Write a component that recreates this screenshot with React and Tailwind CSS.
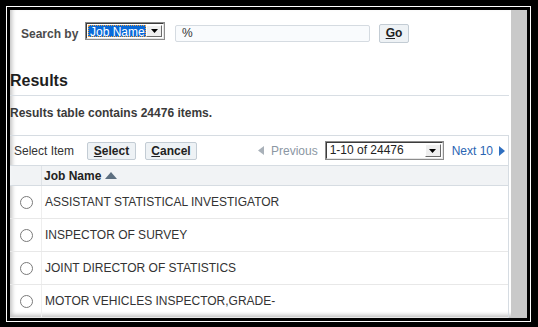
import React from 'react';

const jobs = [
  'ASSISTANT STATISTICAL INVESTIGATOR',
  'INSPECTOR OF SURVEY',
  'JOINT DIRECTOR OF STATISTICS',
  'MOTOR VEHICLES INSPECTOR,GRADE-',
];

const DropArrow = () => (
  <div className="w-[16px] h-full bg-[#efefef] border border-t-white border-l-white border-r-[#6b6b6b] border-b-[#6b6b6b] flex items-center justify-center">
    <svg width="7" height="4" viewBox="0 0 7 4">
      <path d="M0 0 L7 0 L3.5 4 Z" fill="#000" />
    </svg>
  </div>
);

const Radio = () => (
  <div className="w-[13px] h-[13px] rounded-full border border-[#7a7a7a] bg-white"></div>
);

const App = () => {
  return (
    <div className="w-[538px] h-[327px] bg-black pl-[6px] pr-[7px] pt-[6px] pb-[5px] font-['Liberation_Sans',Arial,sans-serif]">
      <div className="h-full border border-white">
        <div className="h-full border-[3px] border-black">
          <div className="h-full flex bg-white shadow-[inset_2px_-3px_4px_rgba(0,0,0,0.25)]">
            {/* main area */}
            <div className="w-[501px] pr-[2px] flex flex-col">
              {/* Search row */}
              <div className="flex items-start pl-[11px] pt-[12px] h-[50px]">
                <span className="text-[12px] font-bold text-[#4b4b4b] mt-[3px] w-[64px]">Search by</span>
                <div className="w-[80px] h-[18px] border border-[#8c8c8c] flex">
                  <div className="flex-1 border border-t-[#3c3c3c] border-l-[#3c3c3c] border-r-[#e5e5e5] border-b-[#e5e5e5] flex p-px">
                    <div className="flex-1 bg-[#0a6ad8] outline outline-1 outline-dotted outline-[#f0a040] -outline-offset-1 text-white text-[12px] leading-[12px] pl-[2px] pt-px">
                      Job Name
                    </div>
                    <DropArrow />
                  </div>
                </div>
                <div className="ml-[10px] mt-[3px] w-[195px] h-[17px] bg-[#f9fbfd] border border-[#d5dbe1] rounded-[2px] text-[12px] leading-[15px] text-[#333] pl-[6px]">
                  %
                </div>
                <button className="ml-[9px] mt-[2px] w-[30px] h-[19px] bg-[#eef2f5] border border-[#c3ccd4] rounded-[2px] text-[12px] font-bold text-[#222] leading-[17px]">
                  <span className="underline">G</span>o
                </button>
              </div>

              {/* Results header */}
              <div className="h-[36px] flex items-end pb-[5px] border-b border-[#d8dee4]">
                <h2 className="text-[16px] font-bold text-[#1e1e1e] leading-[18px]">Results</h2>
              </div>
              <div className="h-[39px] pt-[10px] text-[12px] font-bold text-[#3a3a3a] leading-[14px]">
                Results table contains 24476 items.
              </div>

              {/* Table */}
              <div className="border-r border-[#d6dce2]">
                {/* toolbar */}
                <div className="h-[30px] border-t border-[#d6dce2] flex items-center pl-[4px]">
                  <span className="text-[12px] text-[#333] w-[73px]">Select Item</span>
                  <button className="w-[49px] h-[18px] bg-[#eef2f5] border border-[#c3ccd4] rounded-[2px] text-[12px] font-bold text-[#222] leading-[16px]">
                    <span className="underline">S</span>elect
                  </button>
                  <button className="ml-[9px] w-[52px] h-[18px] bg-[#eef2f5] border border-[#c3ccd4] rounded-[2px] text-[12px] font-bold text-[#222] leading-[16px]">
                    <span className="underline">C</span>ancel
                  </button>
                  <div className="ml-auto flex items-center">
                    <svg width="6" height="9" viewBox="0 0 6 9" className="mr-[7px]">
                      <path d="M6 0 L0 4.5 L6 9 Z" fill="#a9b1b9" />
                    </svg>
                    <span className="text-[12px] text-[#8b97a3]">Previous</span>
                    <div className="ml-[7px] w-[119px] h-[19px] border border-[#8c8c8c] flex">
                      <div className="flex-1 border border-t-[#3c3c3c] border-l-[#3c3c3c] border-r-[#e5e5e5] border-b-[#e5e5e5] flex">
                        <div className="flex-1 bg-white text-[12px] leading-[15px] text-[#222] pl-[3px]">1-10 of 24476</div>
                        <div className="py-px pr-px">
                          <DropArrow />
                        </div>
                      </div>
                    </div>
                    <span className="ml-[8px] text-[12px] text-[#2a64b2]">Next 10</span>
                    <svg width="6" height="10" viewBox="0 0 6 10" className="ml-[6px] mr-[3px]">
                      <path d="M0 0 L6 5 L0 10 Z" fill="#2f6fc0" />
                    </svg>
                  </div>
                </div>
                {/* header */}
                <div className="h-[21px] flex bg-[#f1f3f5] border-t border-b border-[#d6dce2]">
                  <div className="w-[32px] border-r border-[#dfe3e7]"></div>
                  <div className="flex items-center pl-[2px] text-[12px] font-bold text-[#222]">
                    Job Name
                    <svg width="12" height="7" viewBox="0 0 12 7" className="ml-[4px]">
                      <path d="M0 7 L6 0 L12 7 Z" fill="#5d6f80" />
                    </svg>
                  </div>
                </div>
                {/* rows */}
                {jobs.map((job, i) => (
                  <div key={i} className="h-[33px] flex border-b border-[#e8e8e8]">
                    <div className="w-[32px] border-r border-[#eeeeee] flex items-center justify-center pl-[1px]">
                      <Radio />
                    </div>
                    <div className="flex items-center pl-[3px] text-[12px] text-[#333]">{job}</div>
                  </div>
                ))}
              </div>
            </div>
            {/* scrollbar */}
            <div className="w-[16px] bg-[#c9c9c9]"></div>
          </div>
        </div>
      </div>
    </div>
  );
};

export default App;
